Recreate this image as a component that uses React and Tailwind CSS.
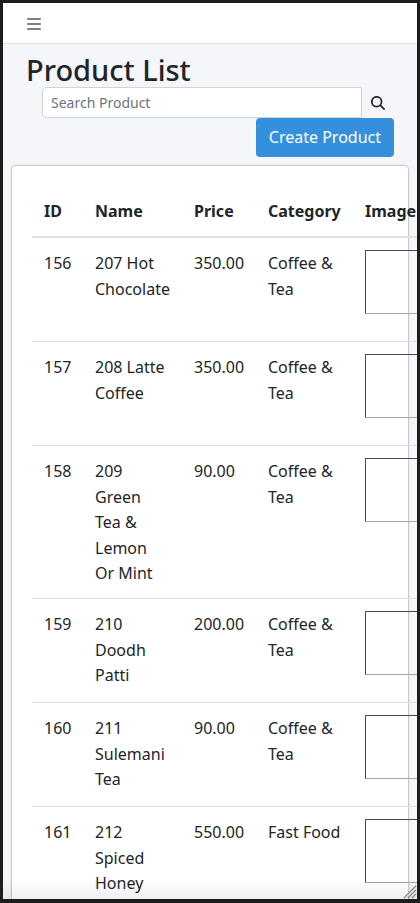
import { FaBars, FaMagnifyingGlass } from 'react-icons/fa6';

const products = [
  { id: 156, name: '207 Hot Chocolate', price: '350.00', category: 'Coffee & Tea' },
  { id: 157, name: '208 Latte Coffee', price: '350.00', category: 'Coffee & Tea' },
  { id: 158, name: '209 Green Tea & Lemon Or Mint', price: '90.00', category: 'Coffee & Tea' },
  { id: 159, name: '210 Doodh Patti', price: '200.00', category: 'Coffee & Tea' },
  { id: 160, name: '211 Sulemani Tea', price: '90.00', category: 'Coffee & Tea' },
  { id: 161, name: '212 Spiced Honey', price: '550.00', category: 'Fast Food' },
];

const headCell = 'border-b-2 border-[#dee2e6] px-3 pt-[13px] pb-[11px]';
const textCell = 'border-b border-[#dee2e6] px-3 pt-[13px] pb-[11px]';
const imageCell = 'border-b border-[#dee2e6] p-3';

function TopBar() {
  return (
    <nav className="flex h-[41px] shrink-0 items-center border-b border-[#dee2e6] bg-white px-[23px] pt-0.5">
      <button type="button" aria-label="Toggle menu" className="text-[#808080]">
        <FaBars size={16} />
      </button>
    </nav>
  );
}

function PageHeader() {
  return (
    <header className="px-[23px] pt-2">
      <h1 className="text-[29px] leading-[35px] font-medium">Product List</h1>
      <form className="flex pl-4" onSubmit={(e) => e.preventDefault()}>
        <input
          type="text"
          aria-label="Search Product"
          placeholder="Search Product"
          className="h-[31px] min-w-0 flex-1 rounded-l border border-[#ced4da] bg-white px-2 text-sm placeholder:text-[#6c757d]"
        />
        <button type="submit" aria-label="Search" className="flex w-8 items-center justify-center">
          <FaMagnifyingGlass size={14} />
        </button>
      </form>
      <div className="flex justify-end">
        <button type="button" className="h-[39px] rounded bg-[#3490dc] px-[13px] pb-0.5 text-base text-white">
          Create Product
        </button>
      </div>
    </header>
  );
}

function ProductTable() {
  return (
    <table className="w-[560px] table-fixed border-separate border-spacing-0 text-left text-base leading-[1.6]">
      <colgroup>
        <col className="w-[51px]" />
        <col className="w-[99px]" />
        <col className="w-[74px]" />
        <col className="w-[97px]" />
        <col />
      </colgroup>
      <thead>
        <tr className="h-[52px]">
          <th className={headCell}>ID</th>
          <th className={headCell}>Name</th>
          <th className={headCell}>Price</th>
          <th className={headCell}>Category</th>
          <th className={headCell}>Image</th>
        </tr>
      </thead>
      <tbody>
        {products.map((p) => (
          <tr key={p.id} className="h-[104px] align-top">
            <td className={textCell}>{p.id}</td>
            <td className={textCell}>{p.name}</td>
            <td className={textCell}>{p.price}</td>
            <td className={textCell}>{p.category}</td>
            <td className={imageCell}>
              <div className="h-16 w-[100px] border border-t-[#4a4a4a] border-r-[#a8a8a8] border-b-[#a8a8a8] border-l-[#4a4a4a]" />
            </td>
          </tr>
        ))}
      </tbody>
    </table>
  );
}

export default function App() {
  return (
    <div className="h-screen overflow-hidden bg-[#1c1c1e] px-[3px] pt-[3px] pb-1 font-['Noto_Sans',sans-serif] text-[#212529]">
      <div className="relative flex h-full flex-col overflow-hidden bg-[#f4f6f9]">
        <TopBar />
        <PageHeader />
        <main className="mx-[9px] mt-[9px] rounded bg-white p-5 shadow-[0_0_1px_1px_rgba(0,0,0,0.1),0_0_2px_1px_rgba(0,0,0,0.12)]">
          <ProductTable />
        </main>
        <div className="absolute inset-x-0 bottom-0 h-5 bg-gradient-to-b from-transparent to-black/6" />
        <svg
          className="absolute right-0 bottom-0"
          width="14"
          height="14"
          viewBox="0 0 14 14"
          stroke="#777"
          strokeWidth="1.2"
          aria-hidden="true"
        >
          <path d="M1 13L13 1M5 13L13 5M9 13L13 9" />
          <path d="M2.5 13L13 2.5M6.5 13L13 6.5M10.5 13L13 10.5" stroke="#ddd" />
        </svg>
      </div>
    </div>
  );
}
